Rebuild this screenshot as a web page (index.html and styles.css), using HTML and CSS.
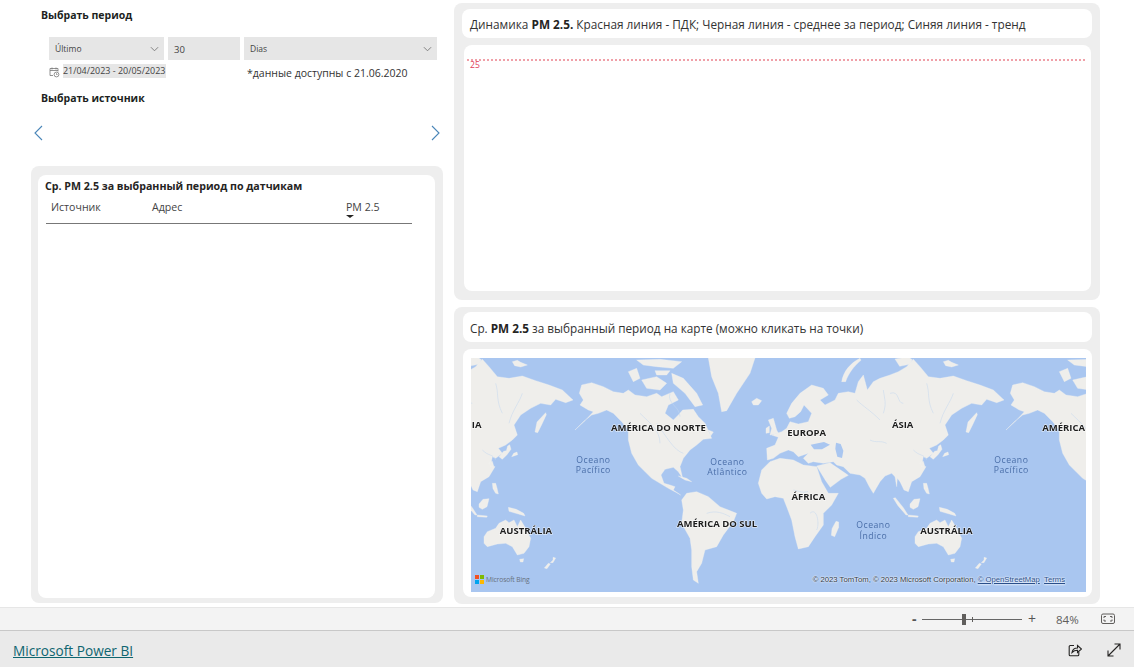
FILE: index.html
```html
<!DOCTYPE html>
<html lang="ru">
<head>
<meta charset="utf-8">
<title>Microsoft Power BI</title>
<link rel="stylesheet" href="styles.css">
</head>
<body>
<div class="page">
  <main class="canvas">
    <section class="left">
      <h2 class="slicer-title">Выбрать период</h2>
      <div class="slicer-row">
        <div class="field field-mode"><span>Último</span>
          <svg class="chev" viewBox="0 0 10 6"><path d="M1 1l4 4 4-4"/></svg></div>
        <div class="field field-num"><span>30</span></div>
        <div class="field field-unit"><span>Dias</span>
          <svg class="chev" viewBox="0 0 10 6"><path d="M1 1l4 4 4-4"/></svg></div>
      </div>
      <div class="date-row">
        <svg class="cal" viewBox="0 0 11 11"><path d="M1 2h8v3M1 2v7h3M1 4h8M3 1v2M7 1v2"/><circle cx="7.5" cy="8" r="2.4"/><path d="M7.5 6.800V8h1"/></svg>
        <span class="date-text">21/04/2023 - 20/05/2023</span>
        <span class="note">*данные доступны с 21.06.2020</span>
      </div>
      <h2 class="slicer-title source-title">Выбрать источник</h2>
      <div class="carousel">
        <svg class="arrow" viewBox="0 0 9 16"><path d="M8 1L1 8l7 7"/></svg>
        <svg class="arrow" viewBox="0 0 9 16"><path d="M1 1l7 7-7 7"/></svg>
      </div>
      <div class="panel table-panel">
        <div class="table-card">
          <h3 class="table-title">Ср. PM 2.5 за выбранный период по датчикам</h3>
          <div class="table-head">
            <span class="th">Источник</span>
            <span class="th">Адрес</span>
            <span class="th">PM 2.5<i class="sort"></i></span>
          </div>
        </div>
      </div>
    </section>

    <section class="right">
      <div class="panel chart-panel">
        <div class="title-card title-top">Динамика <b>PM 2.5.</b> Красная линия - ПДК; Черная линия - среднее за период; Синяя линия - тренд</div>
        <div class="chart-card">
          <div class="limit-line"></div>
          <span class="limit-label">25</span>
        </div>
      </div>
      <div class="panel map-panel">
        <div class="title-card title-map">Ср. <b>PM 2.5</b> за выбранный период на карте (можно кликать на точки)</div>
        <div class="map-card">
          <svg class="map" viewBox="-927 24 1845 702" preserveAspectRatio="none">
            <defs>
              <g id="world">
                <g class="land">
                  <!-- Eurasia -->
                  <path d="M-38 330L-40 295L-15 285L-5 262L-25 255L5 245L20 235L30 215L55 222L85 215L95 190L72 165L62 185L45 200L28 205L20 190L35 160L60 130L95 105L130 115L145 135L120 150L135 165L165 150L175 130L205 125L225 130L235 95L250 75L262 120L280 95L300 85L330 75L355 65L380 50L400 28L420 50L445 80L480 85L520 78L560 92L600 105L640 120L672 150L650 158L620 148L605 165L575 160L545 175L515 195L495 225L505 255L490 270L470 285L448 295L460 310L440 325L430 320L425 345L438 350L420 380L395 395L385 425L372 420L360 395L352 385L350 410L345 380L335 370L315 378L300 395L280 430L268 410L255 385L240 375L210 370L190 350L170 345L160 335L130 340L100 335L85 340L70 325L85 310L55 320L40 305L25 300L0 310L-20 325Z"/>
                  <path d="M185 95C190 65 210 40 240 25L243 31C221 49 205 71 197 95Z"/>
                  <path d="M345 27L385 21L397 29L389 43L359 49Z"/>
                  <path d="M490 35L505 31L515 37L535 45L515 51L497 47Z"/>
                  <path d="M558 246L564 216L590 188L592 194L578 224L566 248Z"/>
                  <path d="M450 320L464 304L472 302L476 288L482 284L486 298L474 314L460 328ZM488 320L506 314L504 306L494 310Z"/>
                  <path d="M420 338L430 334L434 348L424 350Z"/>
                  <!-- Arabia -->
                  <path d="M110 348L150 338L170 352L205 376L183 388L151 412L137 392Z"/>
                  <!-- Africa -->
                  <path d="M-65 400L-55 360L-30 335L0 325L40 330L70 345L110 350L125 395L145 430L175 430L155 465L130 490L130 525L105 560L85 590L55 597L45 560L35 510L20 470L10 445L-15 440L-40 447L-55 430Z"/>
                  <path d="M168 514L176 516L176 532L164 560L154 556L156 536Z"/>
                  <!-- SE Asia islands -->
                  <path d="M340 445L346 443L370 473L384 495L378 495L354 467Z"/>
                  <path d="M390 462L402 448L420 446L414 470L400 478L390 472Z"/>
                  <path d="M430 400L440 400L444 414L448 432L440 430L432 416Z"/>
                  <path d="M478 472L502 478L524 490L528 498L508 492L480 484Z"/>
                  <path d="M385 495L415 498L413 502L385 500Z"/>
                  <!-- Australia -->
                  <path d="M405 560L415 545L440 535L450 520L470 510L480 518L495 510L505 530L515 510L530 535L545 565L540 590L525 610L505 615L490 590L470 580L445 582L415 590L405 580Z"/>
                  <path d="M512 628L524 626L522 636L514 636Z"/>
                  <path d="M612 622L620 624L612 638L604 638L612 630ZM598 640L604 642L594 656L586 654Z"/>
                  <g transform="translate(-960 0)">
                    <!-- North America -->
                    <path d="M358 130L365 105L395 98L430 110L460 125L490 130L505 120L525 135L560 140L590 130L605 140L640 125L655 150L625 165L615 190L640 210L655 195L668 180L700 178L715 200L735 220L755 265L730 268L710 285L690 300L670 325L660 350L668 385L655 365L640 352L615 358L603 375L612 400L630 405L645 410L640 420L662 435L650 428L625 415L600 400L575 385L550 360L535 345L515 310L505 270L505 240L485 215L460 190L440 180L415 190L395 195L370 215L345 240L375 212L400 185L385 180L360 165L370 150Z"/>
                    <!-- Arctic islands -->
                    <path d="M505 65L530 55L540 85L520 95Z"/>
                    <path d="M545 90L590 80L620 100L600 120L560 115Z"/>
                    <path d="M530 30L600 28L665 35L640 55L590 50L550 45Z"/>
                    <path d="M585 62L630 62L620 75L590 75Z"/>
                    <path d="M635 70L670 85L710 130L728 165L705 170L675 130L640 100Z"/>
                    <!-- Greenland and Iceland -->
                    <path d="M745 24L885 24L870 70L830 130L800 182L785 185L775 130L755 80Z"/>
                    <path d="M875 155L890 145L905 152L895 165L880 165Z"/>
                    <!-- British Isles -->
                    <path d="M925 210L940 205L950 240L955 250L930 255L935 235Z"/>
                    <path d="M918 235L928 228L928 248L918 250Z"/>
                    <!-- Caribbean -->
                    <path d="M655 378L680 385L695 395L675 390Z"/>
                    <path d="M745 240L760 246L752 258Z"/>
                    <!-- South America -->
                    <path d="M665 450L680 430L710 425L745 440L780 470L830 490L820 515L790 555L770 590L735 600L725 640L710 665L715 700L700 690L695 650L695 600L690 565L665 520L670 480Z"/>
                  </g>
                </g>
                <g class="water">
                  <path d="M92 284L132 276L150 284L126 298L102 298Z"/>
                  <path d="M168 278L182 282L190 302L186 324L172 320L166 296Z"/>
                </g>
                <g class="rivers">
                  <path d="M230 150c20 20 40 30 70 60M310 120c4 30 10 40 0 70M330 130c30-10 20 30 40 30M440 100c10 30 0 50 20 90M520 130c-10 30-30 50-40 90M270 270c20 10 30 0 50 10M400 300c20 20 30 10 40 30"/>
                  <path d="M-420 190c30 30 60 50 60 90M-330 130c-10 30 30 40 30 70M-370 220c30 40 50 80 80 90"/>
                  <path d="M90 490c20-20 30 30 20 50M40 420c20 4 30 10 44 4"/>
                  <path d="M-220 490c30-10 50 0 70 10"/>
                </g>
              </g>
            </defs>
            <use href="#world" x="-1293"/>
            <use href="#world"/>
            <use href="#world" x="1293"/>
            <g class="ocean-labels">
              <text x="-560" y="339" class="ocean-l">Oceano</text><text x="-560" y="369" class="ocean-l">Pacífico</text>
              <text x="-158" y="344" class="ocean-l">Oceano</text><text x="-158" y="374" class="ocean-l">Atlântico</text>
              <text x="280" y="534" class="ocean-l">Oceano</text><text x="280" y="566" class="ocean-l">Índico</text>
              <text x="694" y="339" class="ocean-l">Oceano</text><text x="694" y="369" class="ocean-l">Pacífico</text>
            </g>
            <g class="continents">
              <text x="-910" y="233">IA</text>
              <text x="-365" y="243">AMÉRICA DO NORTE</text>
              <text x="80" y="258">EUROPA</text>
              <text x="368" y="233">ÁSIA</text>
              <text x="851" y="243">AMÉRICA</text>
              <text x="85" y="450">ÁFRICA</text>
              <text x="-189" y="532">AMÉRICA DO SUL</text>
              <text x="-762" y="552">AUSTRÁLIA</text>
              <text x="499" y="552">AUSTRÁLIA</text>
            </g>
          </svg>
          <div class="bing">
            <span class="ms-logo"><i class="r"></i><i class="g"></i><i class="b"></i><i class="y"></i></span>
            <span>Microsoft Bing</span>
          </div>
          <div class="copyright">© 2023 TomTom, © 2023 Microsoft Corporation, <u>© OpenStreetMap</u> &nbsp;<u>Terms</u></div>
        </div>
      </div>
    </section>
  </main>

  <div class="zoom-bar">
    <span class="zoom-minus">-</span>
    <div class="slider"><i class="tick"></i><i class="thumb"></i></div>
    <span class="zoom-plus">+</span>
    <span class="zoom-value">84%</span>
    <svg class="fit" viewBox="0 0 14 12"><rect x=".5" y="1" width="13" height="9.500" rx="1.500"/><path d="M3 5V3.500h2M9 3.500h2V5M3 6.500V8h2M9 8h2V6.500"/></svg>
  </div>

  <footer class="footer">
    <a class="brand" href="#">Microsoft Power BI</a>
    <div class="foot-icons">
      <svg class="foot-icon" viewBox="0 0 14 14"><path d="M6 2.500H2.200a1 1 0 0 0-1 1v8.300a1 1 0 0 0 1 1h7.600a1 1 0 0 0 1-1V9"/><path d="M4 9.500c.5-3 2.600-4.500 5.500-4.500V2.500L13.500 6 9.500 9.500V7.300C7.500 7.300 5.500 8 4 9.500z"/></svg>
      <svg class="foot-icon" viewBox="0 0 14 14"><path d="M1 13L13 1M7.500 1H13v5.500M1 7.500V13h5.500"/></svg>
    </div>
  </footer>
</div>
</body>
</html>
```
FILE: styles.css
```css
* { box-sizing: border-box; }
html, body { margin: 0; height: 100%; }
body {
  font-family: "Open Sans", "Noto Sans", sans-serif;
  color: #252423;
  background: #fff;
  overflow: hidden;
}
.page { display: flex; flex-direction: column; height: 667px; }

/* canvas */
.canvas {
  height: 607px;
  display: grid;
  grid-template-columns: 412px 646px;
  column-gap: 11px;
  padding-left: 31px;
  background: #fff;
}
.left { display: flex; flex-direction: column; height: 603px; }
.right { display: flex; flex-direction: column; gap: 7px; padding-top: 3px; height: 604px; }
.panel { background: #eeeeee; border-radius: 8px; }

/* slicers */
.slicer-title {
  margin: 8px 0 0 10px;
  height: 15px;
  font-size: 10.5px;
  line-height: 15px;
  font-weight: 700;
  color: #201f1e;
}
.slicer-row { display: flex; gap: 4px; margin: 14px 0 0 18px; }
.field {
  height: 23px;
  background: #e6e6e6;
  display: flex;
  align-items: center;
  justify-content: space-between;
  padding: 0 5px 0 6px;
  font-size: 8.5px;
  color: #444;
}
.field-mode { width: 115px; }
.field-num { width: 72px; font-size: 9.5px; padding-top: 2px; }
.field-unit { width: 193px; }
.chev { width: 9px; height: 6px; fill: none; stroke: #777; stroke-width: 1; }
.date-row { display: flex; align-items: flex-start; height: 24px; margin: 4px 0 0 18px; }
.cal { width: 11px; height: 12px; margin: 2px 3px 0 0; fill: none; stroke: #777; stroke-width: .8; }
.date-text {
  height: 14px;
  background: #e6e6e6;
  font-size: 8.95px;
  line-height: 14px;
  color: #444;
  white-space: nowrap;
  width: 103px;
}
.note { margin: 2px 0 0 81px; font-size: 10.5px; line-height: 14px; color: #333; white-space: nowrap; }
.source-title { margin-top: 3px; }
.carousel {
  display: flex;
  justify-content: space-between;
  height: 16px;
  margin: 19px 3px 0 3px;
}
.arrow { width: 9px; height: 16px; fill: none; stroke: #4a86b8; stroke-width: 1.1; }

/* table */
.table-panel { margin-top: 25px; height: 437px; padding: 9px 8px 5px 7px; }
.table-card { background: #fff; border-radius: 8px; height: 423px; padding: 4px 8px 0 7px; }
.table-title { margin: 0; font-size: 10.65px; line-height: 15px; font-weight: 700; color: #252423; white-space: nowrap; }
.table-head {
  display: grid;
  grid-template-columns: 101px 194px 71px;
  width: 366px;
  margin: 4px 0 0 1px;
  height: 26px;
  padding-top: 2px;
  border-bottom: 1px solid #777;
}
.th { font-size: 10.6px; line-height: 14px; padding-left: 5px; color: #444; position: relative; }
.sort {
  position: absolute;
  left: 5px;
  top: 15px;
  border-left: 4.5px solid transparent;
  border-right: 4.5px solid transparent;
  border-top: 3.5px solid #252423;
}

/* right */
.chart-panel { height: 297px; padding: 6px 8px 9px 8px; display: flex; flex-direction: column; gap: 7px; }
.map-panel { height: 297px; padding: 5px 8px 7px 9px; display: flex; flex-direction: column; gap: 7px; }
.title-card {
  background: #fff;
  border-radius: 8px;
  color: #333;
  white-space: nowrap;
  display: block;
}
.title-card b { font-weight: 700; color: #252423; }
.title-top { height: 29px; padding: 0 0 0 8px; font-size: 11.8px; line-height: 31px; }
.title-map { height: 30px; padding: 0 0 0 7px; font-size: 11.75px; line-height: 33px; }
.chart-card { flex: 1; margin-left: 2px; margin-right: 1px; background: #fff; border-radius: 8px; position: relative; }
.limit-line { position: absolute; left: 3px; right: 6px; top: 14px; border-top: 2px dotted #f0a0a8; }
.limit-label { position: absolute; left: 6px; top: 14px; font-size: 8.6px; line-height: 12px; color: #e0405a; }

/* map */
.map-card { flex: 1; background: #fff; border-radius: 8px; position: relative; padding: 9px 6px 5px 8px; }
.map { display: block; width: 615px; height: 234px; background: #a9c6f0; filter: blur(.3px); }
.land { fill: #efeeeb; stroke: #f3f2ef; stroke-width: 1; stroke-linejoin: round; }
.water { fill: #a9c6f0; }
.rivers { fill: none; stroke: #c3d6ee; stroke-width: 1.5; }
.continents text {
  font-family: "Open Sans", "Noto Sans", sans-serif;
  font-size: 28.5px;
  font-weight: 700;
  fill: #1d1d1d;
  stroke: #fff;
  stroke-width: 3px;
  stroke-opacity: .75;
  paint-order: stroke;
  text-anchor: middle;
}
.ocean-l {
  font-family: "Open Sans", "Noto Sans", sans-serif;
  font-size: 26px;
  letter-spacing: 1.6px;
  fill: #4a6ea8;
  text-anchor: middle;
}
.bing {
  position: absolute;
  left: 12px;
  bottom: 13px;
  display: flex;
  align-items: center;
  gap: 2px;
  font-size: 6.7px;
  letter-spacing: -.1px;
  color: #66707c;
}
.ms-logo { display: grid; grid-template-columns: 4px 4px; grid-auto-rows: 4px; gap: 1px; }
.ms-logo i { display: block; }
.ms-logo .r { background: #f25022; }
.ms-logo .g { background: #7fba00; }
.ms-logo .b { background: #00a4ef; }
.ms-logo .y { background: #ffb900; }
.copyright {
  position: absolute;
  right: 27px;
  bottom: 12px;
  font-family: "Liberation Sans", sans-serif;
  font-size: 7.7px;
  line-height: 10px;
  color: #333c48;
  white-space: nowrap;
  text-shadow: 0 0 2px #fff, 0 0 2px #fff;
}
.copyright u { color: #2a4f8a; }

/* zoom bar */
.zoom-bar {
  height: 24px;
  background: #f3f3f3;
  border-top: 1px solid #e6e6e6;
  border-bottom: 1px solid #c8c8c8;
  display: flex;
  align-items: center;
  padding-left: 912px;
  font-size: 12px;
  color: #605e5c;
}
.zoom-minus { width: 10px; font-weight: 700; font-size: 14px; line-height: 20px; color: #555; }
.slider { width: 100px; height: 1px; background: #666; position: relative; }
.thumb { position: absolute; left: 40px; top: -5px; width: 4px; height: 11px; background: #605e5c; }
.tick { position: absolute; left: 50px; top: -2px; width: 1px; height: 5px; background: #605e5c; }
.zoom-plus { margin-left: 6px; width: 28px; font-size: 14px; line-height: 20px; color: #555; }
.zoom-value { width: 45px; font-size: 11.5px; }
.fit { width: 14px; height: 12px; fill: none; stroke: #605e5c; stroke-width: 1; }

/* footer */
.footer {
  flex: 1;
  background: #eaeaea;
  display: flex;
  align-items: center;
  justify-content: space-between;
  padding: 2px 13px 0 13px;
}
.brand { font-size: 13.65px; color: #0e6570; text-decoration: underline; }
.foot-icons { display: flex; gap: 25px; }
.foot-icon { width: 14px; height: 14px; fill: none; stroke: #252423; stroke-width: 1.1; }
```
